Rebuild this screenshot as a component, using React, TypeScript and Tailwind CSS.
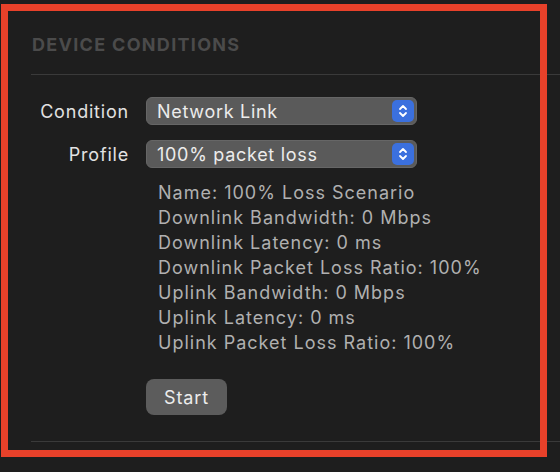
const font = { fontFamily: 'Inter, "Noto Sans", sans-serif' }

const Stepper = () => (
  <div className="flex h-[22px] w-[22px] items-center justify-center rounded-[5px] bg-[#3b70de]">
    <svg width="10" height="14" viewBox="0 0 10 14" fill="none" stroke="white" strokeWidth="1.8" strokeLinecap="round" strokeLinejoin="round">
      <path d="M2 5 L5 2 L8 5" />
      <path d="M2 9 L5 12 L8 9" />
    </svg>
  </div>
)

const SelectRow = ({ label, value }: { label: string; value: string }) => (
  <div className="flex items-center">
    <div className="w-[129px] text-right text-[18px] tracking-[0.8px] text-[#e2e2e2]">{label}</div>
    <div className="ml-[17px] flex h-[28px] w-[271px] items-center justify-between rounded-[6px] border border-[#666] bg-[#5a5a5a] pl-[10px] pr-[2px]">
      <span className="text-[18px] tracking-[0.7px] text-[#ececec]">{value}</span>
      <Stepper />
    </div>
  </div>
)

const info = [
  'Name: 100% Loss Scenario',
  'Downlink Bandwidth: 0 Mbps',
  'Downlink Latency: 0 ms',
  'Downlink Packet Loss Ratio: 100%',
  'Uplink Bandwidth: 0 Mbps',
  'Uplink Latency: 0 ms',
  'Uplink Packet Loss Ratio: 100%',
]

export default function App() {
  return (
    <div className="relative h-[472px] w-[560px] overflow-hidden bg-[#1e1e1e]" style={font}>
      <div className="ml-[31px] border-b border-[#3a3a3a]">
        <div className="flex h-[74px] items-center pl-[1px] pt-[14px] text-[18px] font-bold tracking-[1.3px] text-[#4b4b4b]">
          DEVICE CONDITIONS
        </div>
      </div>

      <div className="flex flex-col gap-[15px] pt-[22px]">
        <SelectRow label="Condition" value="Network Link" />
        <SelectRow label="Profile" value="100% packet loss" />
      </div>

      <div className="ml-[158px] mt-[12px] flex flex-col text-[18px] leading-[25px] tracking-[1px] text-[#b0b0b0]">
        {info.map((line) => (
          <div key={line}>{line}</div>
        ))}
      </div>

      <button className="ml-[146px] mt-[24px] flex h-[36px] w-[81px] items-center justify-center rounded-[8px] bg-[#5c5c5c] text-[18px] tracking-[0.9px] text-[#ececec]">
        Start
      </button>

      <div className="ml-[31px] mt-[26px] border-b border-[#3a3a3a]" />

      <div className="pointer-events-none absolute left-[1px] top-[4px] h-[453px] w-[546px] border-[7px] border-[#e8412a]" />
    </div>
  )
}
